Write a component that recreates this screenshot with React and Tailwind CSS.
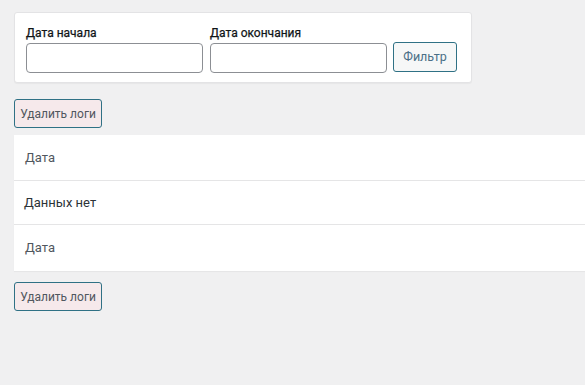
import React from "react";

const DeleteButton = () => (
  <button className="h-[29px] w-[88px] rounded-[3px] border border-[#2f7185] bg-[#f6e9eb] text-[12px] text-[#50575e] leading-none whitespace-nowrap pt-[1px]">
    Удалить логи
  </button>
);

const App = () => {
  return (
    <div
      className="min-h-[385px] w-[585px] overflow-hidden bg-[#f0f0f1] pt-3 pl-[14px]"
      style={{ fontFamily: "Roboto, 'Noto Sans', sans-serif" }}
    >
      <div className="w-[458px] h-[71px] bg-white border border-[#e3e3e5] rounded-[3px] shadow-[0_1px_1px_rgba(0,0,0,0.04)] pl-[11px] pt-[13px] flex items-start gap-[7px]">
        <div className="flex flex-col">
          <label className="text-[12px] text-[#101517] leading-[14px] mb-[3px] [-webkit-text-stroke:0.25px_#101517]">Дата начала</label>
          <input className="w-[177px] h-[30px] border border-[#8c8f94] rounded-[4px] bg-white" />
        </div>
        <div className="flex flex-col">
          <label className="text-[12px] text-[#101517] leading-[14px] mb-[3px] [-webkit-text-stroke:0.25px_#101517]">Дата окончания</label>
          <input className="w-[177px] h-[30px] border border-[#8c8f94] rounded-[4px] bg-white" />
        </div>
        <button className="mt-[16px] -ml-[1px] w-[64px] h-[30px] rounded-[3px] border border-[#2f7185] bg-[#f6f7f7] text-[12.5px] text-[#4a6f86]">
          Фильтр
        </button>
      </div>

      <div className="mt-[16px]">
        <DeleteButton />
      </div>

      <div className="mt-[7px] w-[600px] bg-white shadow-[0_1px_1px_rgba(0,0,0,0.04)]">
        <div className="h-[46px] flex items-center pl-[11px] text-[13px] text-[#50575e] border-b border-[#e5e5e6]">
          Дата
        </div>
        <div className="h-[44px] flex items-center pl-[10px] text-[13px] text-[#2c3338] border-b border-[#e5e5e6]">
          Данных нет
        </div>
        <div className="h-[46px] flex items-center pl-[11px] text-[13px] text-[#50575e]">
          Дата
        </div>
      </div>

      <div className="mt-[11px]">
        <DeleteButton />
      </div>
    </div>
  );
};

export default App;
